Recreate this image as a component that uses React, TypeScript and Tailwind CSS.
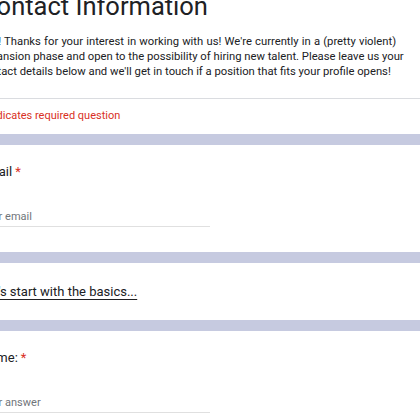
const Asterisk = () => <span className="text-[#d93025] ml-[3px]">*</span>;

const TextQuestion = ({ label, placeholder }: { label: string; placeholder: string }) => (
  <div className="bg-white pt-[17px] pb-[25px]">
    <div className="text-[13px] leading-[20px] text-[#202124]">
      {label}
      <Asterisk />
    </div>
    <div className="mt-[26px] w-[230px] border-b border-[#e0e0e0] text-[11px] leading-[18px] text-[#70757a]">
      {placeholder}
    </div>
  </div>
);

export default function App() {
  return (
    <div className="w-[420px] h-[420px] overflow-hidden bg-[#c6cae0] font-['Roboto',sans-serif]">
      <div className="-ml-[20px] w-[660px] flex flex-col gap-[11px]">
        <div className="bg-white pb-[11px]">
          <h1 className="-mt-[9px] text-[25.5px] leading-[30px] text-[#202124]">
            Contact Information
          </h1>
          <p className="mt-[13px] -ml-[1px] text-[11.25px] leading-[15px] text-[#202124]">
            <span className="[word-spacing:0.4px]">
              Hey! Thanks for your interest in working with us! We're currently in a (pretty violent)
            </span>
            <br />
            expansion phase and open to the possibility of hiring new talent. Please leave us your
            <br />
            contact details below and we'll get in touch if a position that fits your profile opens!
          </p>
          <div className="mt-[19px] -ml-[40px] border-t border-[#dadce0]" />
          <div className="mt-[9px] text-[11px] leading-[15px] text-[#d93025]">
            * Indicates required question
          </div>
        </div>
        <TextQuestion label="Email" placeholder="Your email" />
        <div className="bg-white pt-[19px] pb-[18px]">
          <div className="text-[13px] leading-[20px] text-[#202124] underline underline-offset-[3px]">
            Let's start with the basics...
          </div>
        </div>
        <TextQuestion label="Name:" placeholder="Your answer" />
      </div>
    </div>
  );
}
